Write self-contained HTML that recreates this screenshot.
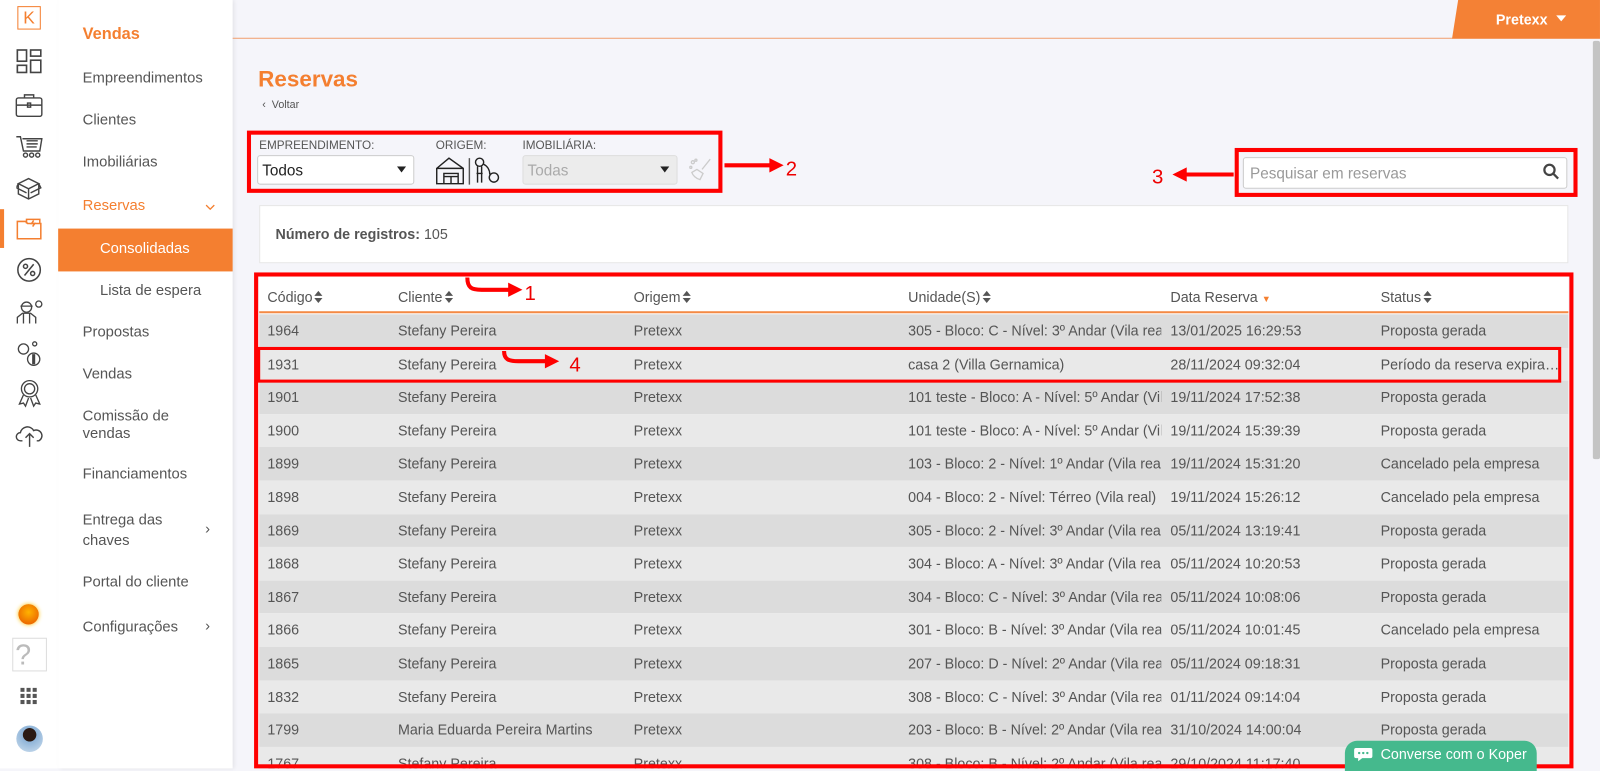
<!DOCTYPE html>
<html><head><meta charset="utf-8"><style>
*{margin:0;padding:0;box-sizing:border-box}
html,body{width:1600px;height:768px;overflow:hidden;background:#f5f5fa;font-family:"Liberation Sans",sans-serif}
#w{position:absolute;left:0;top:0;width:1568px;height:753px;transform:scale(1.0204);transform-origin:0 0;background:#f5f5fa}
.a{position:absolute}
.ib{left:0;top:0;width:57px;height:753px;background:#fff}
.menu{left:57px;top:0;width:171px;height:753px;background:#fff;box-shadow:2px 0 4px rgba(0,0,0,.08)}
.mi{position:absolute;left:24px;font-size:14.5px;color:#555}
.row{position:absolute;left:254px;width:1283px;height:32.6px;font-size:14px;color:#555}
.row span{position:absolute;top:8px;white-space:nowrap;overflow:hidden}
.rb{position:absolute;border:4px solid #f00}
.lbl{position:absolute;font-size:11.5px;color:#555}
svg{position:absolute}
.s{display:inline-block;position:relative;width:9px;height:12px;vertical-align:-1px;margin-left:2px}
.s:before{content:"";position:absolute;left:0;top:0;border-left:4.5px solid transparent;border-right:4.5px solid transparent;border-bottom:5px solid #555}
.s:after{content:"";position:absolute;left:0;top:7px;border-left:4.5px solid transparent;border-right:4.5px solid transparent;border-top:5px solid #555}
</style></head><body><div id="w">
<div class="a ib"></div>
<div class="a" style="left:17px;top:6px;width:23px;height:23px;border:1px solid #f47f30;color:#f47f30;font-size:17px;text-align:center;line-height:21px">K</div>
<svg style="left:16px;top:48px" width="25" height="25" viewBox="0 0 25 25" fill="none" stroke="#444" stroke-width="1.6"><rect x="1" y="1" width="9" height="11"/><rect x="14" y="1" width="10" height="6"/><rect x="1" y="16" width="9" height="7"/><rect x="14" y="11" width="10" height="12"/></svg>
<svg style="left:15px;top:91px" width="27" height="24" viewBox="0 0 27 24" fill="none" stroke="#444" stroke-width="1.4"><rect x="1" y="5" width="25" height="18" rx="2"/><path d="M9 5V2h9v3M1 12h25"/><rect x="12" y="10" width="3" height="4"/></svg>
<svg style="left:15px;top:132px" width="27" height="24" viewBox="0 0 27 24" fill="none" stroke="#444" stroke-width="1.4"><path d="M1 2h4l3 14h16l2-12H7M11 6h11M11 9h11M11 12h10"/><circle cx="10" cy="20" r="2"/><circle cx="16" cy="20" r="2"/><circle cx="22" cy="20" r="2"/></svg>
<svg style="left:16px;top:172px" width="25" height="24" viewBox="0 0 25 24" fill="none" stroke="#444" stroke-width="1.4"><path d="M2 8l10-5 10 5-10 5zM2 8v10l10 5 10-5V8M12 13v10M2 8L0 12l10 5M22 8l2 4-10 5"/></svg>
<div class="a" style="left:0;top:205px;width:4px;height:38px;background:#f47f30"></div>
<svg style="left:16px;top:213px" width="26" height="22" viewBox="0 0 26 22" fill="none" stroke="#f47f30" stroke-width="1.5"><path d="M1 4h8l2 2h13v15H1z"/><path d="M10 6V2h13v4M17 3l-2 3h3l-2 3"/></svg>
<svg style="left:16px;top:252px" width="25" height="25" viewBox="0 0 25 25" fill="none" stroke="#444" stroke-width="1.5"><circle cx="12.5" cy="12.5" r="11"/><circle cx="9" cy="9" r="2"/><circle cx="16" cy="16" r="2"/><path d="M17 7L8 18"/></svg>
<svg style="left:15px;top:292px" width="28" height="26" viewBox="0 0 28 26" fill="none" stroke="#444" stroke-width="1.3"><circle cx="11" cy="9" r="5"/><path d="M5 8h12M2 25v-6l5-4h8l5 4v6M8 15v10M14 15v10"/><circle cx="23" cy="6" r="3"/></svg>
<svg style="left:16px;top:332px" width="28" height="28" viewBox="0 0 28 28" fill="none" stroke="#444" stroke-width="1.3"><circle cx="7" cy="10" r="5"/><circle cx="17" cy="20" r="6"/><path d="M17 15v10" stroke-width="3"/><circle cx="18" cy="5" r="2"/></svg>
<svg style="left:18px;top:372px" width="22" height="28" viewBox="0 0 22 28" fill="none" stroke="#444" stroke-width="1.3"><circle cx="11" cy="9" r="8"/><circle cx="11" cy="9" r="5"/><path d="M5 15l-4 9 4-1 2 3 3-8M17 15l4 9-4-1-2 3-3-8"/></svg>
<svg style="left:15px;top:415px" width="28" height="24" viewBox="0 0 28 24" fill="none" stroke="#444" stroke-width="1.4"><path d="M7 17H5a4 4 0 010-8 7 7 0 0113-2 5 5 0 015 10h-2M14 10v13M10 14l4-4 4 4"/></svg>
<div class="a" style="left:18px;top:592px;width:20px;height:20px;border-radius:50%;background:radial-gradient(circle at 50% 40%,#ffb300,#e65100);box-shadow:0 0 4px #ffc107"></div>
<div class="a" style="left:12px;top:625px;width:34px;height:33px;border:1px solid #ddd;color:#bbb;font-size:28px;line-height:31px;padding-left:2px">?</div>
<svg style="left:20px;top:674px" width="17" height="17"><g fill="#555"><rect x="0" y="0" width="4" height="4"/><rect x="6" y="0" width="4" height="4"/><rect x="12" y="0" width="4" height="4"/><rect x="0" y="6" width="4" height="4"/><rect x="6" y="6" width="4" height="4"/><rect x="12" y="6" width="4" height="4"/><rect x="0" y="12" width="4" height="4"/><rect x="6" y="12" width="4" height="4"/><rect x="12" y="12" width="4" height="4"/></g></svg>
<div class="a" style="left:16px;top:711px;width:26px;height:26px;border-radius:50%;background:radial-gradient(circle at 50% 35%,#2b1a14 30%,#8fb4d8 32%,#cfe0f0)"></div>

<div class="a menu">
<div class="mi" style="top:25px;color:#f47f30;font-weight:bold;font-size:16px">Vendas</div>
<div class="mi" style="top:69px">Empreendimentos</div>
<div class="mi" style="top:110px">Clientes</div>
<div class="mi" style="top:151px">Imobiliárias</div>
<div class="mi" style="top:194px;color:#f47f30">Reservas</div>
<svg style="left:144px;top:200px" width="10" height="6" fill="none" stroke="#f47f30" stroke-width="1.3"><path d="M1 1l4 4 4-4"/></svg>
<div class="a" style="left:0;top:224px;width:171px;height:42px;background:#f47f30"></div>
<div class="mi" style="top:236px;left:41px;color:#fff">Consolidadas</div>
<div class="mi" style="top:277px;left:41px">Lista de espera</div>
<div class="mi" style="top:318px">Propostas</div>
<div class="mi" style="top:359px">Vendas</div>
<div class="mi" style="top:400px;line-height:17px">Comissão de<br>vendas</div>
<div class="mi" style="top:457px">Financiamentos</div>
<div class="mi" style="top:500px;line-height:20px">Entrega das<br>chaves</div>
<div class="mi" style="top:511px;left:144px">›</div>
<div class="mi" style="top:563px">Portal do cliente</div>
<div class="mi" style="top:607px">Configurações</div>
<div class="mi" style="top:606px;left:144px">›</div>
</div>

<div class="a" style="left:228px;top:37px;width:1340px;height:1px;background:#f0a070"></div>
<svg style="left:1420px;top:0" width="148" height="38"><polygon points="9,0 148,0 148,38 3,38" fill="#f48135"/></svg>
<div class="a" style="left:1466px;top:11px;color:#fff;font-weight:bold;font-size:14px">Pretexx</div>
<svg style="left:1525px;top:15px" width="10" height="6"><polygon points="0,0 10,0 5,6" fill="#fff"/></svg>
<div class="a" style="left:1561px;top:40px;width:7px;height:410px;background:#c4c4c4;border-radius:2px"></div>

<div class="a" style="left:253px;top:65px;color:#f47f30;font-weight:bold;font-size:22px">Reservas</div>
<div class="a" style="left:257px;top:97px;color:#555;font-size:10.5px">‹&nbsp;&nbsp;Voltar</div>

<div class="lbl" style="left:254px;top:137px">EMPREENDIMENTO:</div>
<div class="a" style="left:252px;top:152px;width:154px;height:29px;background:#fff;border:1px solid #ccc;border-radius:3px;font-size:15px;color:#222;padding:6px 0 0 4px">Todos</div>
<svg style="left:389px;top:163px" width="9" height="6"><polygon points="0,0 9,0 4.5,6" fill="#222"/></svg>
<div class="lbl" style="left:427px;top:137px">ORIGEM:</div>
<svg style="left:426px;top:153px" width="68" height="28" fill="none" stroke="#222" stroke-width="1.4"><path d="M2 12L14 2l14 10v15H2zM2 12h26M9 27V17h14v10M9 20h14M16 20v7"/><path d="M34 2v26" stroke="#555"/><circle cx="44" cy="6" r="4"/><path d="M42 10v16M46 10v16M41 17h6"/><circle cx="58" cy="21" r="4.5"/><path d="M48 8c4 2 6 6 6 10"/></svg>
<div class="lbl" style="left:512px;top:137px">IMOBILIÁRIA:</div>
<div class="a" style="left:512px;top:152px;width:152px;height:29px;background:#ececec;border:1px solid #ddd;border-radius:3px;font-size:15px;color:#aaa;padding:6px 0 0 4px">Todas</div>
<svg style="left:647px;top:163px" width="9" height="6"><polygon points="0,0 9,0 4.5,6" fill="#222"/></svg>
<svg style="left:675px;top:154px" width="24" height="24" fill="none" stroke="#ccc" stroke-width="1.3"><path d="M21 2l-8 10M8 12l6 4-3 6c-4-1-7-4-8-7z"/><circle cx="4" cy="5" r="1.5"/><circle cx="2" cy="10" r="1"/><circle cx="7" cy="3" r="1"/></svg>
<div class="rb" style="left:242px;top:128px;width:466px;height:61px"></div>
<svg style="left:708px;top:150px" width="90" height="28"><path d="M2 12h46" stroke="#f00" stroke-width="4"/><polygon points="46,5 60,12 46,19" fill="#f00"/><text x="62" y="22" font-size="20" fill="#e00" font-family="Liberation Sans">2</text></svg>

<div class="a" style="left:1218px;top:154px;width:318px;height:31px;background:#fff;border:1px solid #ccc;border-radius:3px;font-size:15px;color:#999;padding:7px 0 0 6px">Pesquisar em reservas</div>
<svg style="left:1512px;top:160px" width="16" height="16" fill="none" stroke="#444" stroke-width="2.2"><circle cx="6.5" cy="6.5" r="5"/><path d="M10 10l5 5"/></svg>
<div class="rb" style="left:1210px;top:145px;width:336px;height:48px"></div>
<svg style="left:1125px;top:158px" width="86" height="28"><text x="4" y="22" font-size="20" fill="#e00" font-family="Liberation Sans">3</text><polygon points="24,13 38,6 38,20" fill="#f00"/><path d="M36 13h48" stroke="#f00" stroke-width="4"/></svg>

<div class="a" style="left:254px;top:201px;width:1283px;height:57px;background:#fff;border:1px solid #e6e6e6"></div>
<div class="a" style="left:270px;top:221px;font-size:14px;color:#555"><b>Número de registros:</b> 105</div>

<div class="a" style="left:254px;top:270px;width:1283px;height:483px;background:#fff"></div>
<div class="a" style="left:254px;top:305px;width:1283px;height:2px;background:#f48a45"></div>
<div class="row" style="top:275px;color:#555"><span style="left:8px">Código<i class="s"></i></span><span style="left:136px">Cliente<i class="s"></i></span><span style="left:367px">Origem<i class="s"></i></span><span style="left:636px">Unidade(S)<i class="s"></i></span><span style="left:893px">Data Reserva <b style="color:#f47f30;font-size:9px">▼</b></span><span style="left:1099px">Status<i class="s"></i></span></div>

<div class="row" style="top:308.0px;background:#dcdcdc"><span style="left:8px">1964</span><span style="left:136px">Stefany Pereira</span><span style="left:367px">Pretexx</span><span style="left:636px;width:248px">305 - Bloco: C - Nível: 3º Andar (Vila real)</span><span style="left:893px">13/01/2025 16:29:53</span><span style="left:1099px">Proposta gerada</span></div>
<div class="row" style="top:340.6px;background:#e9e9e9"><span style="left:8px">1931</span><span style="left:136px">Stefany Pereira</span><span style="left:367px">Pretexx</span><span style="left:636px;width:248px">casa 2 (Villa Gernamica)</span><span style="left:893px">28/11/2024 09:32:04</span><span style="left:1099px">Período da reserva expira…</span></div>
<div class="row" style="top:373.2px;background:#dcdcdc"><span style="left:8px">1901</span><span style="left:136px">Stefany Pereira</span><span style="left:367px">Pretexx</span><span style="left:636px;width:248px">101 teste - Bloco: A - Nível: 5º Andar (Vila)</span><span style="left:893px">19/11/2024 17:52:38</span><span style="left:1099px">Proposta gerada</span></div>
<div class="row" style="top:405.8px;background:#e9e9e9"><span style="left:8px">1900</span><span style="left:136px">Stefany Pereira</span><span style="left:367px">Pretexx</span><span style="left:636px;width:248px">101 teste - Bloco: A - Nível: 5º Andar (Vila)</span><span style="left:893px">19/11/2024 15:39:39</span><span style="left:1099px">Proposta gerada</span></div>
<div class="row" style="top:438.4px;background:#dcdcdc"><span style="left:8px">1899</span><span style="left:136px">Stefany Pereira</span><span style="left:367px">Pretexx</span><span style="left:636px;width:248px">103 - Bloco: 2 - Nível: 1º Andar (Vila real)</span><span style="left:893px">19/11/2024 15:31:20</span><span style="left:1099px">Cancelado pela empresa</span></div>
<div class="row" style="top:471.0px;background:#e9e9e9"><span style="left:8px">1898</span><span style="left:136px">Stefany Pereira</span><span style="left:367px">Pretexx</span><span style="left:636px;width:248px">004 - Bloco: 2 - Nível: Térreo (Vila real)</span><span style="left:893px">19/11/2024 15:26:12</span><span style="left:1099px">Cancelado pela empresa</span></div>
<div class="row" style="top:503.6px;background:#dcdcdc"><span style="left:8px">1869</span><span style="left:136px">Stefany Pereira</span><span style="left:367px">Pretexx</span><span style="left:636px;width:248px">305 - Bloco: 2 - Nível: 3º Andar (Vila real)</span><span style="left:893px">05/11/2024 13:19:41</span><span style="left:1099px">Proposta gerada</span></div>
<div class="row" style="top:536.2px;background:#e9e9e9"><span style="left:8px">1868</span><span style="left:136px">Stefany Pereira</span><span style="left:367px">Pretexx</span><span style="left:636px;width:248px">304 - Bloco: A - Nível: 3º Andar (Vila real)</span><span style="left:893px">05/11/2024 10:20:53</span><span style="left:1099px">Proposta gerada</span></div>
<div class="row" style="top:568.8px;background:#dcdcdc"><span style="left:8px">1867</span><span style="left:136px">Stefany Pereira</span><span style="left:367px">Pretexx</span><span style="left:636px;width:248px">304 - Bloco: C - Nível: 3º Andar (Vila real)</span><span style="left:893px">05/11/2024 10:08:06</span><span style="left:1099px">Proposta gerada</span></div>
<div class="row" style="top:601.4px;background:#e9e9e9"><span style="left:8px">1866</span><span style="left:136px">Stefany Pereira</span><span style="left:367px">Pretexx</span><span style="left:636px;width:248px">301 - Bloco: B - Nível: 3º Andar (Vila real)</span><span style="left:893px">05/11/2024 10:01:45</span><span style="left:1099px">Cancelado pela empresa</span></div>
<div class="row" style="top:634.0px;background:#dcdcdc"><span style="left:8px">1865</span><span style="left:136px">Stefany Pereira</span><span style="left:367px">Pretexx</span><span style="left:636px;width:248px">207 - Bloco: D - Nível: 2º Andar (Vila real)</span><span style="left:893px">05/11/2024 09:18:31</span><span style="left:1099px">Proposta gerada</span></div>
<div class="row" style="top:666.6px;background:#e9e9e9"><span style="left:8px">1832</span><span style="left:136px">Stefany Pereira</span><span style="left:367px">Pretexx</span><span style="left:636px;width:248px">308 - Bloco: C - Nível: 3º Andar (Vila real)</span><span style="left:893px">01/11/2024 09:14:04</span><span style="left:1099px">Proposta gerada</span></div>
<div class="row" style="top:699.2px;background:#dcdcdc"><span style="left:8px">1799</span><span style="left:136px">Maria Eduarda Pereira Martins</span><span style="left:367px">Pretexx</span><span style="left:636px;width:248px">203 - Bloco: B - Nível: 2º Andar (Vila real)</span><span style="left:893px">31/10/2024 14:00:04</span><span style="left:1099px">Proposta gerada</span></div>
<div class="row" style="top:731.8px;height:21px;background:#e9e9e9;overflow:hidden"><span style="left:8px">1767</span><span style="left:136px">Stefany Pereira</span><span style="left:367px">Pretexx</span><span style="left:636px;width:248px">308 - Bloco: B - Nível: 2º Andar (Vila real)</span><span style="left:893px">29/10/2024 11:17:40</span><span style="left:1099px">Proposta gerada</span></div>

<div class="rb" style="left:249px;top:267px;width:1293px;height:486px"></div>
<div class="rb" style="left:252px;top:340px;width:1278px;height:35px;border-width:3px"></div>
<svg style="left:452px;top:270px" width="90" height="28"><path d="M6 2c0 10 4 12 14 12h28" fill="none" stroke="#f00" stroke-width="4"/><polygon points="46,7 60,14 46,21" fill="#f00"/><text x="62" y="24" font-size="20" fill="#e00" font-family="Liberation Sans">1</text></svg>
<svg style="left:488px;top:342px" width="100" height="28"><path d="M6 2c0 8 4 10 14 10h28" fill="none" stroke="#f00" stroke-width="4"/><polygon points="46,5 60,12 46,19" fill="#f00"/><text x="70" y="22" font-size="20" fill="#e00" font-family="Liberation Sans">4</text></svg>

<div class="a" style="left:1318px;top:726px;width:188px;height:30px;background:#45b98d;border-radius:12px 12px 0 0;color:#fff;font-size:14px;padding:5px 0 0 35px">Converse com o Koper</div>
<svg style="left:1327px;top:732px" width="18" height="14"><path d="M2 1h14a2 2 0 012 2v6a2 2 0 01-2 2H8l-4 3v-3H2a2 2 0 01-2-2V3a2 2 0 012-2z" fill="#fff"/><g fill="#45b98d"><circle cx="5" cy="6" r="1.2"/><circle cx="9" cy="6" r="1.2"/><circle cx="13" cy="6" r="1.2"/></g></svg>
</div></body></html>
